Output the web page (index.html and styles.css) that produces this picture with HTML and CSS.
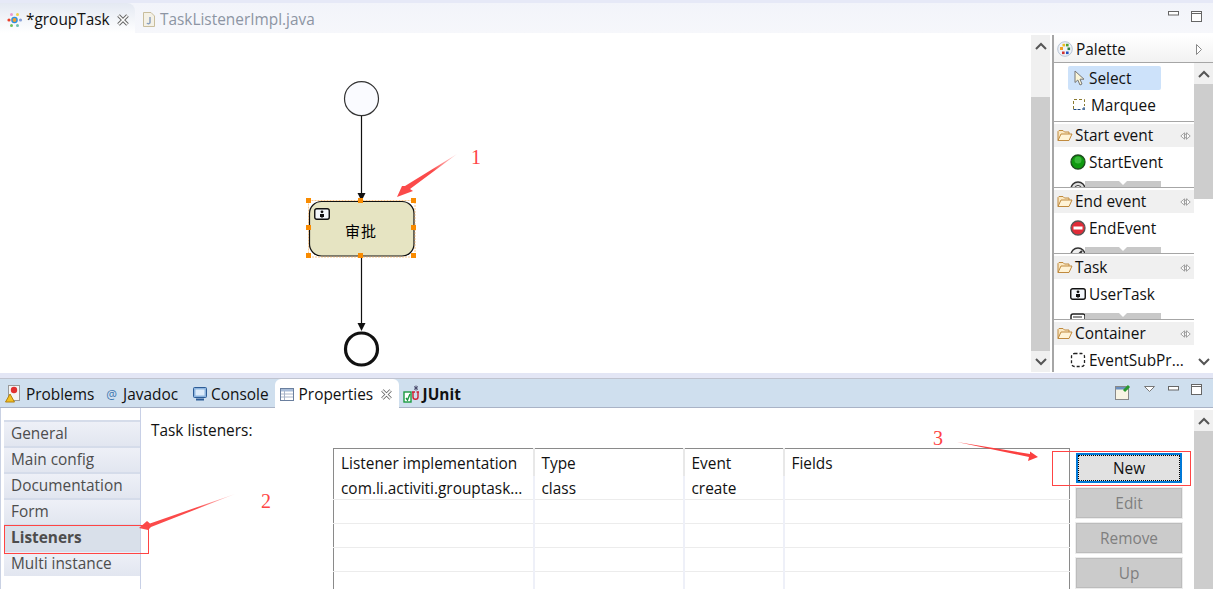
FILE: index.html
```html
<!DOCTYPE html>
<html>
  <head>
    <meta charset="utf-8" />
    <title>groupTask - Eclipse</title>
    <link rel="stylesheet" href="styles.css">
  </head>

  <body>
    <svg class="defs" width="0" height="0">
      <symbol id="close" viewBox="0 0 12 12">
        <path d="M1.5 1.5 L10.5 10.5 M10.5 1.5 L1.5 10.5" stroke="#666" stroke-width="3.6" />
        <path d="M1.5 1.5 L10.5 10.5 M10.5 1.5 L1.5 10.5" stroke="#fff" stroke-width="1.6" />
      </symbol>
      <symbol id="min" viewBox="0 0 11 5">
        <rect x="0.5" y="0.5" width="10" height="3.5" fill="#fff" stroke="#666" />
      </symbol>
      <symbol id="max" viewBox="0 0 11 11">
        <rect x="0.5" y="0.5" width="10" height="10" fill="#fff" stroke="#666" />
        <path d="M1 2.5 H10" stroke="#666" />
      </symbol>
      <symbol id="folder" viewBox="0 0 16 13">
        <path d="M1 11.5 V2.5 L2 1.5 H6 L7.5 3 H12 V5" fill="#fbe9c4" stroke="#c08a3e" />
        <path d="M1 11.5 L4 5 H15 L12 11.5 Z" fill="#fff3d6" stroke="#c08a3e" />
      </symbol>
      <symbol id="toggle" viewBox="0 0 11 8">
        <path d="M4.5 0.8 L0.8 4 L4.5 7.2 Z" fill="#fff" stroke="#999" stroke-width="0.9" />
        <path d="M7 0.8 L3.8 4 L7 7.2" fill="none" stroke="#999" stroke-width="0.9" />
        <path d="M6.5 0.8 L10.2 4 L6.5 7.2 Z" fill="#fff" stroke="#999" stroke-width="0.9" />
      </symbol>
      <symbol id="person-box" viewBox="0 0 16 12">
        <rect x="0.75" y="0.75" width="14.5" height="10.5" rx="2" fill="#f4f8fc" stroke="#111" stroke-width="1.4" />
        <circle cx="8" cy="3.8" r="1.4" fill="#111" />
        <path d="M6 9 V6 H10 V9 Z M7 9 L8 10 L9 9" fill="#111" />
      </symbol>
    </svg>

    <section class="editor">
      <div class="editor-tabs">
        <div class="tab tab-active">
          <svg class="icon" width="17" height="16" viewBox="0 0 17 16">
            <circle cx="3" cy="8" r="1.6" fill="#e8402c" />
            <circle cx="5.5" cy="2.5" r="1.5" fill="#e89ad0" />
            <circle cx="11.5" cy="2.5" r="1.5" fill="#f0d050" />
            <circle cx="14.5" cy="8" r="1.6" fill="#88a0d8" />
            <circle cx="5.5" cy="13.5" r="1.5" fill="#70c060" />
            <circle cx="11.5" cy="13.5" r="1.5" fill="#70c0b0" />
            <circle cx="8.5" cy="8" r="2.6" fill="#f0a030" stroke="#2c90e0" stroke-width="1.4" />
          </svg>
          <span class="tab-text">*groupTask</span>
          <svg class="tab-close" width="12" height="12"><use href="#close" /></svg>
        </div>
        <div class="tab tab-java">
          <svg class="icon" width="12" height="15" viewBox="0 0 12 15">
            <path d="M0.5 0.5 H8 L11.5 4 V14.5 H0.5 Z" fill="#f4f1e6" stroke="#c8bd9c" />
            <path d="M7 5 V10.5 C7 12 4.5 12 4 11" fill="none" stroke="#8aa0c0" stroke-width="1.5" />
          </svg>
          <span class="tab-text">TaskListenerImpl.java</span>
        </div>
        <div class="win-buttons">
          <svg width="11" height="5"><use href="#min" /></svg>
          <svg width="11" height="11"><use href="#max" /></svg>
        </div>
      </div>

      <div class="editor-body">
        <svg class="canvas" width="1031" height="337" viewBox="0 35 1031 337">
          <circle cx="361.5" cy="98.7" r="17" fill="#fafbff" stroke="#333" stroke-width="1.2" />
          <path d="M361.5 116 V194 M361.5 256 V324" stroke="#111" stroke-width="1.2" />
          <path d="M357.5 193 H365.5 L361.5 201 Z M357.5 323 H365.5 L361.5 331 Z" fill="#111" />
          <rect x="309.5" y="201.5" width="104.5" height="54.5" rx="12" fill="#e6e4c2" stroke="#111" stroke-width="1.2" />
          <rect x="308.5" y="200.5" width="106.5" height="56.5" fill="none" stroke="#f7a341" stroke-dasharray="2 1" stroke-opacity="0.6" />
          <use href="#person-box" x="314" y="208" width="16" height="12" />
          <text class="task-label" x="361" y="237">审批</text>
          <g fill="#f98b00">
            <rect x="306" y="198" width="5" height="5" />
            <rect x="358" y="198" width="5" height="5" />
            <rect x="411" y="198" width="5" height="5" />
            <rect x="306" y="225" width="5" height="5" />
            <rect x="411" y="225" width="5" height="5" />
            <rect x="306" y="253" width="5" height="5" />
            <rect x="358" y="253" width="5" height="5" />
            <rect x="411" y="253" width="5" height="5" />
          </g>
          <circle cx="361.5" cy="349" r="16" fill="#fff" stroke="#111" stroke-width="3.2" />
        </svg>

        <div class="scrollbar scroll-canvas">
          <div class="scroll-btn">
            <svg width="12" height="8" viewBox="0 0 12 8"><path d="M1 7 L6 2 L11 7" fill="none" stroke="#555" stroke-width="2" /></svg>
          </div>
          <div class="scroll-pad"></div>
          <div class="scroll-thumb"></div>
          <div class="scroll-btn">
            <svg width="12" height="8" viewBox="0 0 12 8"><path d="M1 1 L6 6 L11 1" fill="none" stroke="#555" stroke-width="2" /></svg>
          </div>
        </div>

        <aside class="palette">
          <div class="palette-head">
            <svg class="icon" width="16" height="16" viewBox="0 0 16 16">
              <circle cx="8" cy="8" r="7.3" fill="#eef2f8" stroke="#b8c4d4" />
              <rect x="3" y="6" width="3" height="3" fill="#f0a020" />
              <rect x="5.5" y="2.8" width="2.6" height="2.6" fill="#e8c020" />
              <rect x="9" y="2.8" width="2.6" height="2.6" fill="#50a030" />
              <rect x="10.5" y="6.5" width="2.6" height="2.6" fill="#308040" />
              <rect x="5" y="10.5" width="2.6" height="2.6" fill="#d03030" />
              <rect x="9" y="10.5" width="2.6" height="2.6" fill="#2050c0" />
            </svg>
            <span>Palette</span>
            <svg class="palette-arrow" width="6" height="11" viewBox="0 0 6 11"><path d="M0.5 0.5 L5.5 5.5 L0.5 10.5 Z" fill="#fff" stroke="#888" /></svg>
          </div>
          <div class="palette-body">
            <div class="palette-list">
              <div class="tools">
                <div class="tool tool-selected">
                  <svg width="11" height="16" viewBox="0 0 11 16"><path d="M1 1 V12.5 L3.8 10 L6 15 L8 14 L6 9.2 H10 Z" fill="#fbf6d8" stroke="#777" /></svg>
                  <span>Select</span>
                </div>
                <div class="tool tool-marquee">
                  <svg width="15" height="14" viewBox="0 0 15 14"><path d="M1.5 11 V1.5 H12.5 V8" fill="none" stroke="#8a7a30" stroke-dasharray="3 2" /><path d="M1.5 11.5 H9 M12 9 V13 M10 11 H14" fill="none" stroke="#204a80" stroke-dasharray="3 1" /></svg>
                  <span>Marquee</span>
                </div>
              </div>

              <div class="drawer">
                <div class="drawer-head">
                  <svg width="16" height="13"><use href="#folder" /></svg>
                  <span>Start event</span>
                  <svg class="drawer-toggle" width="11" height="8"><use href="#toggle" /></svg>
                </div>
                <div class="entry">
                  <svg width="16" height="16" viewBox="0 0 16 16"><circle cx="8" cy="8" r="7" fill="#0f9a0f" stroke="#1c4c1c" stroke-width="1.3" /><circle cx="8" cy="6" r="3.5" fill="#3ab83a" /></svg>
                  <span>StartEvent</span>
                </div>
                <div class="peek">
                  <svg width="16" height="16" viewBox="0 0 16 16"><circle cx="8" cy="8" r="7" fill="#ddd" stroke="#333" stroke-width="1.5" /><circle cx="8" cy="8" r="3.5" fill="#fff" stroke="#333" /></svg>
                  <div class="peek-bar"><div class="peek-mark"></div></div>
                </div>
              </div>

              <div class="drawer">
                <div class="drawer-head">
                  <svg width="16" height="13"><use href="#folder" /></svg>
                  <span>End event</span>
                  <svg class="drawer-toggle" width="11" height="8"><use href="#toggle" /></svg>
                </div>
                <div class="entry">
                  <svg width="16" height="16" viewBox="0 0 16 16"><circle cx="8" cy="8" r="7" fill="#e02c38" stroke="#555" stroke-width="1.3" /><rect x="3.5" y="6.5" width="9" height="3" fill="#fff" /></svg>
                  <span>EndEvent</span>
                </div>
                <div class="peek">
                  <svg width="16" height="16" viewBox="0 0 16 16"><circle cx="8" cy="8" r="7" fill="#eee" stroke="#333" stroke-width="1.5" /><path d="M4 12 L12 4" stroke="#333" stroke-width="2" /></svg>
                  <div class="peek-bar"><div class="peek-mark"></div></div>
                </div>
              </div>

              <div class="drawer">
                <div class="drawer-head">
                  <svg width="16" height="13"><use href="#folder" /></svg>
                  <span>Task</span>
                  <svg class="drawer-toggle" width="11" height="8"><use href="#toggle" /></svg>
                </div>
                <div class="entry">
                  <svg width="16" height="12"><use href="#person-box" /></svg>
                  <span>UserTask</span>
                </div>
                <div class="peek">
                  <svg width="16" height="16" viewBox="0 0 16 16"><rect x="1" y="1" width="14" height="12" rx="2" fill="#fff" stroke="#222" stroke-width="1.5" /><path d="M3 4 H12" stroke="#222" /></svg>
                  <div class="peek-bar"><div class="peek-mark"></div></div>
                </div>
              </div>

              <div class="drawer">
                <div class="drawer-head">
                  <svg width="16" height="13"><use href="#folder" /></svg>
                  <span>Container</span>
                  <svg class="drawer-toggle" width="11" height="8"><use href="#toggle" /></svg>
                </div>
                <div class="entry">
                  <svg width="16" height="16" viewBox="0 0 16 16"><rect x="1.5" y="1.5" width="13" height="13" rx="3" fill="#fff" stroke="#222" stroke-width="1.3" stroke-dasharray="3 2" /></svg>
                  <span>EventSubPr...</span>
                </div>
              </div>
            </div>

            <div class="scrollbar scroll-palette">
              <div class="scroll-btn">
                <svg width="12" height="8" viewBox="0 0 12 8"><path d="M1 7 L6 2 L11 7" fill="none" stroke="#555" stroke-width="2" /></svg>
              </div>
              <div class="scroll-thumb"></div>
              <div class="scroll-pad"></div>
              <div class="scroll-btn">
                <svg width="12" height="8" viewBox="0 0 12 8"><path d="M1 1 L6 6 L11 1" fill="none" stroke="#555" stroke-width="2" /></svg>
              </div>
            </div>
          </div>
        </aside>
      </div>
    </section>

    <section class="views">
      <div class="view-tabs">
        <div class="vtab vtab-problems">
          <svg width="16" height="18" viewBox="0 0 16 18">
            <rect x="3.5" y="0.5" width="11" height="15" fill="#f4f4f4" stroke="#999" />
            <circle cx="9" cy="5" r="3.2" fill="#e03030" />
            <path d="M5 9 L9.5 17 H0.5 Z" fill="#f4c020" stroke="#b08010" />
          </svg>
          <span>Problems</span>
        </div>
        <div class="vtab vtab-javadoc">
          <span class="at">@</span>
          <span>Javadoc</span>
        </div>
        <div class="vtab vtab-console">
          <svg width="14" height="14" viewBox="0 0 14 14">
            <rect x="0.5" y="0.5" width="13" height="10" rx="1" fill="#8db4de" stroke="#2d5c96" />
            <rect x="2.5" y="2.5" width="9" height="6" fill="#dcebfa" />
            <path d="M3 12.5 H11" stroke="#2d5c96" stroke-width="2" />
          </svg>
          <span>Console</span>
        </div>
        <div class="vtab vtab-active">
          <svg width="14" height="13" viewBox="0 0 14 13">
            <rect x="0.5" y="0.5" width="13" height="12" fill="#fff" stroke="#6a7f9e" />
            <rect x="1" y="1" width="12" height="2.5" fill="#a8bcd8" />
            <path d="M1 6 H13 M1 9 H13 M4.5 3 V12" stroke="#a8b4c8" />
          </svg>
          <span>Properties</span>
          <svg class="tab-close" width="11" height="11"><use href="#close" /></svg>
        </div>
        <div class="vtab vtab-junit">
          <svg width="17" height="18" viewBox="0 0 17 18">
            <rect x="1" y="7" width="7" height="10" fill="#fff" stroke="#1a9a40" stroke-width="1.4" />
            <path d="M3 13 L4.5 15 L7 9" fill="none" stroke="#1a9a40" stroke-width="1.4" />
            <path d="M10 7 V12 C10 15 15 15 15 12 V7 M9 7 H12 M13.5 7 H16" fill="none" stroke="#d02030" stroke-width="1.4" />
            <path d="M13 0.5 V5.5 M11 1.5 L15 4.5 M15 1.5 L11 4.5" stroke="#446" stroke-width="1" />
          </svg>
          <span>JUnit</span>
        </div>
        <div class="view-tools">
          <svg width="16" height="16" viewBox="0 0 16 16">
            <rect x="0.5" y="2.5" width="13" height="13" fill="#f8f4e4" stroke="#888" />
            <rect x="1" y="3" width="12" height="2.5" fill="#6a90c0" />
            <path d="M9 7 L14 2" stroke="#2a9a30" stroke-width="3" />
          </svg>
          <svg class="view-menu" width="11" height="6" viewBox="0 0 11 6"><path d="M0.5 0.5 H10.5 L5.5 5.5 Z" fill="#fff" stroke="#777" /></svg>
          <svg class="view-min" width="11" height="5"><use href="#min" /></svg>
          <svg width="11" height="11"><use href="#max" /></svg>
        </div>
      </div>

      <div class="view-body">
        <nav class="sections">
          <div class="section">General</div>
          <div class="section">Main config</div>
          <div class="section">Documentation</div>
          <div class="section">Form</div>
          <div class="section section-on">Listeners</div>
          <div class="section">Multi instance</div>
        </nav>

        <div class="props">
          <div class="props-title">Task listeners:</div>
          <div class="props-row">
            <table class="listeners">
              <colgroup>
                <col class="col-impl" />
                <col class="col-type" />
                <col class="col-event" />
                <col />
              </colgroup>
              <tr class="head-row">
                <th>Listener implementation</th>
                <th>Type</th>
                <th>Event</th>
                <th>Fields</th>
              </tr>
              <tr class="first-row">
                <td>com.li.activiti.grouptask...</td>
                <td>class</td>
                <td>create</td>
                <td></td>
              </tr>
              <tr><td></td><td></td><td></td><td></td></tr>
              <tr><td></td><td></td><td></td><td></td></tr>
              <tr><td></td><td></td><td></td><td></td></tr>
              <tr><td></td><td></td><td></td><td></td></tr>
            </table>
            <div class="actions">
              <button class="btn btn-focus">New</button>
              <button class="btn" disabled>Edit</button>
              <button class="btn" disabled>Remove</button>
              <button class="btn" disabled>Up</button>
            </div>
          </div>
        </div>

        <div class="scrollbar scroll-props">
          <div class="scroll-btn">
            <svg width="12" height="8" viewBox="0 0 12 8"><path d="M1 7 L6 2 L11 7" fill="none" stroke="#555" stroke-width="2" /></svg>
          </div>
          <div class="scroll-thumb"></div>
        </div>
      </div>
    </section>

    <!-- red notes drawn over the screenshot -->
    <svg class="notes" width="1213" height="589" viewBox="0 0 1213 589">
      <defs>
        <linearGradient id="fade1" x1="457" y1="154" x2="397" y2="197" gradientUnits="userSpaceOnUse">
          <stop offset="0" stop-color="#ff6a6a" stop-opacity="0.25" />
          <stop offset="0.4" stop-color="#fb4a4a" />
        </linearGradient>
        <linearGradient id="fade2" x1="235" y1="494" x2="139" y2="528" gradientUnits="userSpaceOnUse">
          <stop offset="0" stop-color="#ff6a6a" stop-opacity="0.25" />
          <stop offset="0.4" stop-color="#fb4a4a" />
        </linearGradient>
      </defs>
      <polygon points="457,154 410,189 413,191 397,197 402,186 405,186" fill="url(#fade1)" />
      <polygon points="235,494 150,523.5 147,521 139,528 148,530 151,527" fill="url(#fade2)" />
      <polygon points="957,442 1030,454 1030,451.5 1038,457 1028,461 1029,457" fill="#fb4040" />
      <rect x="4.5" y="525.5" width="144" height="28" fill="none" stroke="#f44" />
      <rect x="1052.5" y="451.5" width="138" height="34" fill="none" stroke="#f44" />
      <text class="note-num" x="471" y="164">1</text>
      <text class="note-num" x="261" y="508">2</text>
      <text class="note-num" x="933" y="445">3</text>
    </svg>
  </body>
</html>
```

FILE: styles.css
```css
* {
  box-sizing: border-box;
}

body {
  margin: 0;
  width: 1213px;
  height: 589px;
  overflow: hidden;
  position: relative;
  background: #fff;
  font-family: "Open Sans", "Noto Sans", sans-serif;
  font-size: 15.4px;
  color: #111;
}

svg {
  display: block;
  flex: none;
}

.defs {
  position: absolute;
}

/* editor area */
.editor {
  height: 373px;
  border-top: 3px solid #e6e9f7;
}

.editor-tabs {
  height: 30px;
  display: flex;
  align-items: stretch;
  background: linear-gradient(#f2f4fa, #f6f7fb);
}

.tab {
  display: flex;
  align-items: center;
  padding-top: 3px;
}

.tab-active {
  width: 135px;
  padding-left: 6px;
  background: linear-gradient(#e4e9f2, #fff);
  border-top-right-radius: 8px;
}

.tab-text {
  margin-left: 3px;
}

.tab-close {
  margin-left: 7px;
}

.tab-java {
  margin-left: 8px;
  color: #8d95a3;
}

.tab-java .tab-text {
  margin-left: 5px;
}

.win-buttons {
  margin-left: auto;
  display: flex;
  align-items: flex-start;
  gap: 12px;
  padding: 8px 11px 0 0;
}

.editor-body {
  height: 340px;
  padding: 2px 0 1px;
  display: flex;
}

.canvas {
  flex: none;
}

.scrollbar {
  width: 19px;
  flex: none;
  display: flex;
  flex-direction: column;
}

.scroll-btn {
  height: 21px;
  flex: none;
  display: flex;
  align-items: center;
  justify-content: center;
  background: #f0f0f0;
}

.scroll-thumb {
  background: #cdcdcd;
}

.scroll-pad {
  background: #f0f0f0;
}

.scroll-canvas .scroll-pad {
  height: 41px;
}

.scroll-canvas .scroll-thumb {
  flex: 1;
}

/* palette */
.palette {
  margin-left: 2px;
  width: 161px;
  border-left: 2px solid #a6a6a6;
  display: flex;
  flex-direction: column;
}

.palette-head {
  height: 28px;
  flex: none;
  display: flex;
  align-items: center;
  gap: 3px;
  padding: 1px 0 0 3px;
  border-bottom: 1px solid #a6a6a6;
  background: linear-gradient(#fff, #f2f2f2);
}

.palette-arrow {
  margin-left: auto;
  margin-right: 11px;
}

.palette-body {
  flex: 1;
  display: flex;
  min-height: 0;
  overflow: hidden;
}

.palette-list {
  width: 140px;
  flex: none;
}

.tools {
  height: 58px;
  padding-top: 3px;
}

.tool {
  width: 93px;
  height: 24px;
  margin: 0 0 3px 14px;
  padding-left: 6px;
  display: flex;
  align-items: center;
  gap: 4px;
  border-radius: 2px;
}

.tool-selected {
  background: #cde2fa;
}

.tool-marquee {
  padding-left: 4px;
}

.drawer {
  height: 66px;
  overflow: hidden;
  border-top: 1px solid #a6a6a6;
  padding-top: 2px;
}

.drawer-head {
  height: 23px;
  display: flex;
  align-items: center;
  gap: 2px;
  padding-left: 3px;
  background: #f0f0f0;
}

.drawer-toggle {
  margin-left: auto;
  margin-right: 3px;
}

.entry {
  height: 24px;
  margin-top: 3px;
  padding-left: 16px;
  display: flex;
  align-items: center;
  gap: 3px;
  white-space: nowrap;
}

.peek {
  height: 6px;
  margin-top: 7px;
  padding-left: 16px;
  display: flex;
  align-items: flex-start;
  overflow: hidden;
}

.peek-bar {
  width: 76px;
  height: 6px;
  margin-left: -1px;
  padding-left: 34px;
  background: #c8c8c8;
}

.peek-mark {
  width: 0;
  border: 4px solid transparent;
  border-top-color: #fff;
  border-bottom: 0;
}

.scroll-palette .scroll-thumb {
  height: 115px;
  flex: none;
}

.scroll-palette .scroll-pad {
  flex: 1;
  background: #fff;
}

.scroll-palette .scroll-btn:last-child {
  background: #fff;
}

.task-label {
  font-family: "Noto Sans CJK SC", sans-serif;
  font-size: 15px;
  text-anchor: middle;
  letter-spacing: 1px;
}

/* views area */
.views {
  height: 216px;
  border-top: 5px solid #e3e6f5;
}

.view-tabs {
  height: 30px;
  display: flex;
  border-top: 1px solid #bfc3cf;
  border-bottom: 1px solid #a9b3c6;
  background: #cfdfee;
}

.vtab {
  display: flex;
  align-items: center;
  gap: 5px;
  padding-top: 2px;
}

.vtab-problems {
  margin-left: 5px;
}

.vtab-javadoc {
  margin-left: 12px;
  gap: 6px;
}

.vtab-console {
  margin-left: 15px;
  gap: 4px;
}

.at {
  color: #3f78b0;
  font-size: 12px;
}

.vtab-active {
  width: 124px;
  height: 29px;
  margin-left: 6px;
  padding-left: 5px;
  background: #fff;
  border-radius: 6px 6px 0 0;
  position: relative;
  z-index: 1;
}

.vtab-active .tab-close {
  margin-left: 3px;
}

.vtab-junit {
  margin-left: 4px;
  gap: 3px;
  font-weight: 700;
}

.view-tools {
  margin-left: auto;
  display: flex;
  align-items: flex-start;
  padding: 5px 11px 0 0;
}

.view-menu {
  margin: 2px 0 0 13px;
}

.view-min {
  margin: 2px 12px 0 13px;
}

.view-body {
  height: 181px;
  display: flex;
  overflow: hidden;
  border-left: 1px solid #c9d1e3;
  padding-left: 3px;
}

.sections {
  width: 137px;
  flex: none;
  padding-top: 12px;
  border-right: 1px solid #c8d0e6;
}

.section {
  height: 26px;
  padding-left: 7px;
  line-height: 23px;
  color: #4d4d4d;
  border-top: 2px solid #d5dcea;
  background: linear-gradient(#eef0f7, #e2e6f0);
}

.section-on {
  font-weight: 700;
  background: #d9e0ea;
}

.props {
  width: 1053px;
  flex: none;
}

.props-title {
  height: 20px;
  margin: 13px 0 0 10px;
  line-height: 20px;
}

.props-row {
  display: flex;
  align-items: flex-start;
  margin: 7px 0 0 192px;
  gap: 6px;
}

.listeners {
  width: 737px;
  flex: none;
  table-layout: fixed;
  border-collapse: collapse;
  border: 1px solid #8a8a8a;
}

.col-impl {
  width: 200px;
}

.col-type {
  width: 150px;
}

.col-event {
  width: 100px;
}

.listeners th,
.listeners td {
  height: 24px;
  padding: 0 0 0 7px;
  font-weight: 400;
  line-height: 20px;
  text-align: left;
  white-space: nowrap;
  border-right: 2px solid #eef0f8;
  border-bottom: 1px solid #ececec;
}

.listeners th {
  height: 27px;
  padding-top: 3px;
  border-bottom: 0;
  border-right-color: #e8e8e8;
}

.listeners .first-row td {
  padding-top: 3px;
}

.listeners td:last-child,
.listeners th:last-child {
  border-right: 0;
}

.actions {
  width: 106px;
  flex: none;
  padding-top: 5px;
  display: flex;
  flex-direction: column;
  gap: 5px;
}

.btn {
  height: 30px;
  flex: none;
  font: inherit;
  color: #7f7f7f;
  background: #cbcbcb;
  border: 1px solid #bcbcbc;
  box-shadow: 0 0 0 1px #ececec;
}

.btn-focus {
  color: #111;
  background: #e1e1e1;
  border: 2px solid #0078d7;
  box-shadow: none;
  outline: 1px dotted #000;
  outline-offset: -3px;
}

.scroll-props {
  padding-top: 2px;
}

.scroll-props .scroll-thumb {
  flex: 1;
}

/* annotations */
.notes {
  position: absolute;
  left: 0;
  top: 0;
  pointer-events: none;
}

.note-num {
  font-family: "Liberation Serif", serif;
  font-size: 20px;
  fill: #f44;
}
```
